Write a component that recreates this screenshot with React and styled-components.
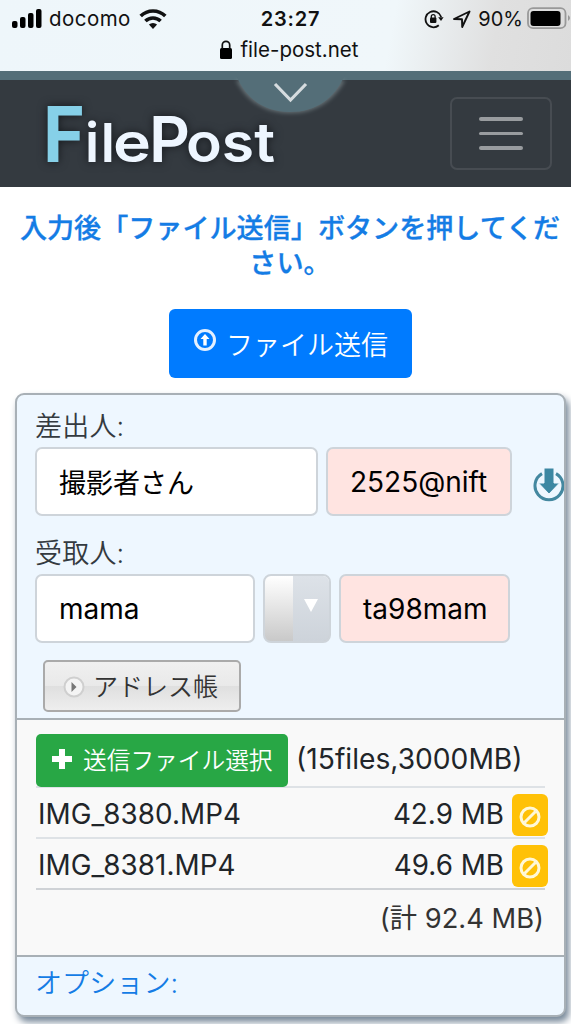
import styled, { createGlobalStyle } from "styled-components";

const GlobalStyle = createGlobalStyle`
    * {
        box-sizing: border-box;
    }
    body {
        margin: 0;
        background: #fff;
        color: #212529;
        font-family: Inter, "Noto Sans CJK JP", sans-serif;
        font-size: 27px;
    }
`;

const Page = styled.div`
    width: 571px;
    height: 1024px;
    overflow: hidden;
    background: #fff;
`;

const PhoneBar = styled.header`
    height: 71px;
    color: #111;
    background: linear-gradient(100deg, #eef6fa 0%, #f0f7fa 68%, #e0e0e0 86%, #dcdcdc 100%);
`;

const StatusRow = styled.div`
    display: grid;
    grid-template-columns: 1fr 64px 1fr;
    align-items: center;
    height: 37px;
    padding-left: 12px;
`;

const StatusGroup = styled.div`
    display: flex;
    align-items: center;
    justify-content: ${(props) => (props.$end ? "flex-end" : "flex-start")};
    font-size: 20px;
    white-space: nowrap;
    svg {
        flex: none;
    }
`;

const Carrier = styled.span`
    margin: 0 8px 0 7px;
    font-size: 20.5px;
    letter-spacing: 0.45px;
`;

const Clock = styled.div`
    margin-left: -2px;
    font-size: 20px;
    font-weight: 600;
    letter-spacing: 0.8px;
    text-align: center;
    white-space: nowrap;
`;

const Percent = styled.span`
    margin: 0 4px 0 7px;
`;

const AddressRow = styled.div`
    display: flex;
    justify-content: center;
    align-items: center;
    gap: 8px;
    height: 24px;
    padding-left: 6px;
    font-size: 20.5px;
`;

const PullStrip = styled.div`
    position: relative;
    height: 9px;
    background: #546e78;
`;

const PullTab = styled.svg`
    position: absolute;
    left: 226px;
    top: 0;
    z-index: 1;
`;

const NavBar = styled.nav`
    display: flex;
    justify-content: space-between;
    align-items: flex-start;
    height: 107px;
    padding: 17px 19px 0 36px;
    background: #343a40;
`;

const Toggler = styled.button`
    display: flex;
    flex-direction: column;
    justify-content: center;
    align-items: center;
    gap: 11px;
    width: 102px;
    height: 73px;
    padding: 0 1px 0 0;
    border: 2px solid #474c52;
    border-radius: 7px;
    background: transparent;
`;

const TogglerLine = styled.span`
    width: 44px;
    height: 3.5px;
    border-radius: 2px;
    background: #999c9f;
`;

const Logo = styled.svg`
    margin-top: -17px;
    overflow: visible;
    filter: drop-shadow(0 0 5px #15181c);
`;

const Notice = styled.p`
    margin: 0;
    padding: 22px 0 0 9px;
    height: 122px;
    color: #147ce5;
    font-size: 27.1px;
    line-height: 35px;
    font-family: "Noto Sans CJK JP", sans-serif;
    font-weight: 500;
    -webkit-text-stroke: 0.3px #147ce5;
    text-align: center;
    white-space: nowrap;
`;

const Submit = styled.button`
    display: flex;
    align-items: center;
    gap: 9px;
    width: 243px;
    height: 69px;
    margin: 0 0 15px 169px;
    padding: 0 0 0 24px;
    border: 0;
    border-radius: 6px;
    color: #fff;
    background: #007bff;
    font-family: inherit;
    font-size: 27px;
    font-weight: 350;
    white-space: nowrap;
    svg {
        flex: none;
        margin-top: -7px;
    }
`;

const Card = styled.main`
    width: 551px;
    height: 624px;
    margin-left: 15px;
    border: 2px solid #a8b0b6;
    border-radius: 9px;
    background: #eef7ff;
    box-shadow: 3px 5px 7px #778899;
    overflow: hidden;
`;

const Addresses = styled.section`
    height: 323px;
    padding: 10px 0 0 18px;
`;

const Label = styled.div`
    height: 42px;
    color: #343a40;
    font-weight: 350;
    line-height: 43px;
    letter-spacing: 0.2px;
`;

const FieldRow = styled.div`
    display: flex;
    align-items: center;
    gap: 8px;
    margin-bottom: 16px;
`;

const Field = styled.div`
    display: flex;
    align-items: center;
    flex: none;
    width: ${(props) => props.$width}px;
    height: 69px;
    padding: 0 0 0 22px;
    border: 2px solid #ced4da;
    border-radius: 7px;
    background: ${(props) => (props.$locked ? "#ffe4e1" : "#fff")};
    color: #000;
    font-size: ${(props) => props.$size ?? 28}px;
    font-weight: 375;
    white-space: nowrap;
`;

const Picker = styled.div`
    display: flex;
    flex: none;
    width: 68px;
    height: 69px;
    border: 2px solid #ced4da;
    border-radius: 8px;
    overflow: hidden;
    background: linear-gradient(#fff, #c9c9c9);
`;

const PickerArrow = styled.span`
    display: flex;
    justify-content: center;
    align-items: center;
    width: 36px;
    margin-left: auto;
    padding-bottom: 7px;
    background: linear-gradient(#dde2e8, #cdd3da);
`;

const Restore = styled.svg`
    flex: none;
    margin: 6px 0 0 12px;
`;

const BookButton = styled.button`
    display: flex;
    align-items: center;
    gap: 8px;
    width: 198px;
    height: 52px;
    margin: 17px 0 0 8px;
    padding: 0 0 2px 18px;
    border: 2px solid #aaa;
    border-radius: 5px;
    color: #333;
    background: linear-gradient(#f0f0f0, #e9e9e9 50%, #dfdfdf 50%, #eee);
    font-family: inherit;
    font-size: 25px;
    font-weight: 350;
    white-space: nowrap;
    svg {
        margin-top: 3px;
    }
`;

const Files = styled.section`
    height: 239px;
    padding: 14px 19px 0 19px;
    border-top: 2px solid #a8b0b6;
    border-bottom: 2px solid #a8b0b6;
    background: #f9f9f9;
    font-size: 27.8px;
`;

const PickRow = styled.div`
    display: flex;
    align-items: center;
    height: 54px;
    border-bottom: 2px solid #dee2e6;
    white-space: nowrap;
`;

const Limit = styled.span`
    margin-left: 8px;
    padding-bottom: 3px;
    font-size: 28.2px;
`;

const PickButton = styled.button`
    display: flex;
    align-items: center;
    flex: none;
    gap: 11px;
    width: 252px;
    height: 53px;
    padding: 0 0 2px 16px;
    border: 0;
    border-radius: 5px;
    color: #fff;
    background: #28a745;
    font-family: inherit;
    font-size: 23.7px;
    font-weight: 350;
    white-space: nowrap;
    svg {
        flex: none;
    }
`;

const FileRow = styled.div`
    display: flex;
    align-items: center;
    height: 51px;
    padding-left: 2px;
    border-bottom: 2px solid ${(props) => (props.$last ? "#cfd2d6" : "#dee2e6")};
`;

const FileName = styled.span`
    padding-top: 2px;
    letter-spacing: 0.1px;
`;

const FileSize = styled.span`
    margin-left: auto;
    margin-right: 8px;
    padding-top: 2px;
`;

const RemoveButton = styled.button`
    display: flex;
    justify-content: center;
    align-items: center;
    flex: none;
    width: 36px;
    height: 42px;
    margin-right: -3px;
    margin-top: 4px;
    padding: 5px 0 0;
    border: 0;
    border-radius: 6px;
    background: #ffc107;
`;

const Total = styled.div`
    padding-right: 1px;
    color: #333;
    font-size: 27.3px;
    font-weight: 375;
    line-height: 57px;
    text-align: right;
`;

const Options = styled.div`
    padding-left: 18px;
    color: #147ce5;
    font-weight: 350;
    line-height: 54px;
    letter-spacing: 0.1px;
`;

const files = [
    { name: "IMG_8380.MP4", size: "42.9 MB" },
    { name: "IMG_8381.MP4", size: "49.6 MB" },
];

function StatusBar() {
    return (
        <PhoneBar>
            <StatusRow>
                <StatusGroup>
                    <svg width='30' height='20' viewBox='0 0 30 20'>
                        <rect x='0' y='12' width='5.5' height='7' rx='2' />
                        <rect x='8' y='8' width='5.5' height='11' rx='2' />
                        <rect x='16' y='4' width='5.5' height='15' rx='2' />
                        <rect x='24' y='0' width='5.5' height='19' rx='2' />
                    </svg>
                    <Carrier>docomo</Carrier>
                    <svg width='28' height='21' viewBox='0 0 28 21' fill='none' stroke='#111' strokeWidth='3.6'>
                        <path d='M1.7 8a17.5 17.5 0 0 1 24.6 0' />
                        <path d='M6.4 13a11 11 0 0 1 15.2 0' />
                        <path d='M14 21l-4.1-4.5a6 6 0 0 1 8.2 0z' fill='#111' stroke='none' />
                    </svg>
                </StatusGroup>
                <Clock>23:27</Clock>
                <StatusGroup $end>
                    <svg width='20' height='20' viewBox='0 0 20 20' fill='none' stroke='#111' strokeWidth='1.8'>
                        <path d='M14.8 16.3A8 8 0 1 1 17.2 8' />
                        <path d='M14.2 8.2h5.4L17 12z' fill='#111' stroke='none' />
                        <rect x='6' y='8.6' width='6.4' height='5.4' rx='1' fill='#111' stroke='none' />
                        <path d='M7.3 9V7.5a1.9 1.9 0 0 1 3.8 0V9' strokeWidth='1.3' />
                    </svg>
                    <svg width='27' height='18' viewBox='-9 0 27 18'>
                        <path
                            d='M16.5 1.5L9.2 17l-.2-7.7-8-.3z'
                            fill='none'
                            stroke='#111'
                            strokeWidth='1.9'
                            strokeLinejoin='round'
                        />
                    </svg>
                    <Percent>90%</Percent>
                    <svg width='44' height='23' viewBox='0 0 44 23'>
                        <rect x='1' y='1.2' width='37.5' height='20' rx='5' fill='none' stroke='#999' strokeWidth='1.8' />
                        <rect x='3.5' y='4' width='30' height='15' rx='3' />
                        <path d='M41 8q4 3 0 6z' fill='#999' />
                    </svg>
                </StatusGroup>
            </StatusRow>
            <AddressRow>
                <svg width='14' height='19' viewBox='0 0 14 19'>
                    <rect x='1' y='8' width='12' height='11' rx='1.5' />
                    <path d='M3.3 9V5a3.7 3.7 0 0 1 7.4 0v4' fill='none' stroke='#111' strokeWidth='1.7' />
                </svg>
                file-post.net
            </AddressRow>
        </PhoneBar>
    );
}

function Header() {
    return (
        <>
            <PullStrip>
                <PullTab width='130' height='50' viewBox='0 0 130 50'>
                    <defs>
                        <filter id='tabGlow' x='-20%' y='-20%' width='140%' height='160%'>
                            <feGaussianBlur stdDeviation='2' />
                        </filter>
                    </defs>
                    <path d='M10 9C20 29 38 42 64 42S108 29 119 9z' fill='#8b9a9e' opacity='.6' filter='url(#tabGlow)' />
                    <path d='M10 4C20 28 38 41 64 41S108 28 119 4z' fill='#546e78' />
                    <path d='M49 13l15.5 16L80 13' fill='none' stroke='#d6dcdf' strokeWidth='3.2' />
                </PullTab>
            </PullStrip>
            <NavBar>
                <Logo width='250' height='106' viewBox='36 80 250 106' fontFamily='Inter, sans-serif' fontWeight='600'>
                    <text y='162' fontSize='54' fill='#eef6ff'>
                        <tspan x='43' fontSize='77' fontWeight='700' fill='#86d0e8' textLength='42' lengthAdjust='spacingAndGlyphs'>
                            F
                        </tspan>
                        <tspan x='85' textLength='30' lengthAdjust='spacing'>
                            il
                        </tspan>
                        <tspan x='113' textLength='38' lengthAdjust='spacingAndGlyphs'>
                            e
                        </tspan>
                        <tspan x='149' fontSize='63' textLength='41' lengthAdjust='spacingAndGlyphs'>
                            P
                        </tspan>
                        <tspan x='186' textLength='89' lengthAdjust='spacingAndGlyphs'>
                            ost
                        </tspan>
                    </text>
                </Logo>
                <Toggler aria-label='menu'>
                    <TogglerLine />
                    <TogglerLine />
                    <TogglerLine />
                </Toggler>
            </NavBar>
        </>
    );
}

function AddressForm() {
    return (
        <Addresses>
            <Label>差出人:</Label>
            <FieldRow>
                <Field $width={283} $size={27}>
                    撮影者さん
                </Field>
                <Field $width={186} $locked>
                    2525@nift
                </Field>
                <Restore width='34' height='36' viewBox='0 0 34 36'>
                    <path d='M10 6.6A14 14 0 1 0 24 6.6' fill='none' stroke='#4488a0' strokeWidth='3' />
                    <path d='M12 1h10v15h5.5L17 27 6.5 16H12z' fill='#3c87a2' stroke='#eef7ff' strokeWidth='1' />
                </Restore>
            </FieldRow>
            <Label>受取人:</Label>
            <FieldRow>
                <Field $width={220}>mama</Field>
                <Picker>
                    <PickerArrow>
                        <svg width='14' height='13' viewBox='0 0 14 13'>
                            <path d='M0 0h14L7 13z' fill='#fff' />
                        </svg>
                    </PickerArrow>
                </Picker>
                <Field $width={171} $locked>
                    ta98mam
                </Field>
            </FieldRow>
            <BookButton>
                <svg width='22' height='22' viewBox='0 0 22 22'>
                    <circle cx='11' cy='11' r='9.5' fill='#f4f4f4' stroke='#cfcfcf' strokeWidth='2' />
                    <path d='M8.5 6L13.5 11l-5 5z' fill='#777' />
                </svg>
                アドレス帳
            </BookButton>
        </Addresses>
    );
}

function FileList() {
    return (
        <Files>
            <PickRow>
                <PickButton>
                    <svg width='20' height='20' viewBox='0 0 20 20'>
                        <path d='M7 0h6v7h7v6h-7v7H7v-7H0V7h7z' fill='#fff' />
                    </svg>
                    送信ファイル選択
                </PickButton>
                <Limit>(15files,3000MB)</Limit>
            </PickRow>
            {files.map((file, i) => (
                <FileRow key={file.name} $last={i === files.length - 1}>
                    <FileName>{file.name}</FileName>
                    <FileSize>{file.size}</FileSize>
                    <RemoveButton aria-label='remove'>
                        <svg width='22' height='22' viewBox='0 0 22 22' fill='none' stroke='#fff8d8' strokeWidth='3'>
                            <circle cx='11' cy='11' r='9' />
                            <path d='M5.5 16.5l11-11' />
                        </svg>
                    </RemoveButton>
                </FileRow>
            ))}
            <Total>(計 92.4 MB)</Total>
        </Files>
    );
}

export default function App() {
    return (
        <Page>
            <GlobalStyle />
            <StatusBar />
            <Header />
            <Notice>
                入力後「ファイル送信」ボタンを押してくだ
                <br />
                さい。
            </Notice>
            <Submit>
                <svg width='24' height='24' viewBox='0 0 24 24'>
                    <circle cx='12' cy='12' r='9.5' fill='none' stroke='#e4f0ff' strokeWidth='3' />
                    <path d='M12 6l4.5 5h-2.8v6.5h-3.4V11H7.5z' fill='#fff' />
                </svg>
                ファイル送信
            </Submit>
            <Card>
                <AddressForm />
                <FileList />
                <Options>オプション:</Options>
            </Card>
        </Page>
    );
}
